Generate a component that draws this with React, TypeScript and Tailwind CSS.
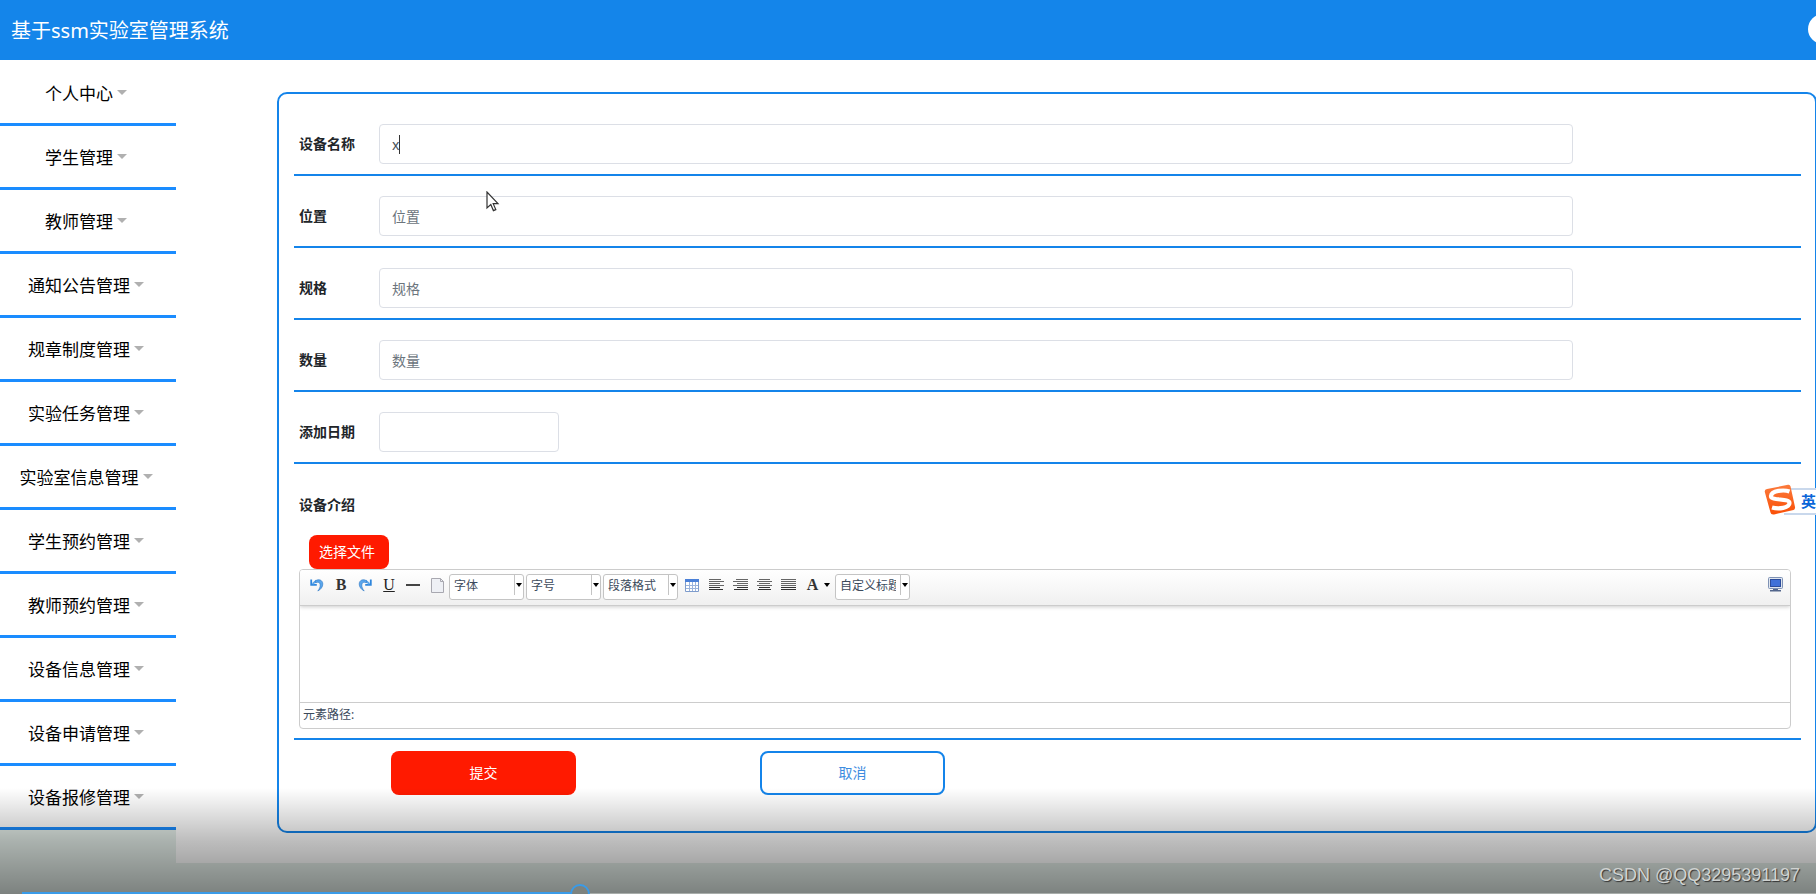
import { useState, type ReactNode } from "react";

const menu = [
  "个人中心",
  "学生管理",
  "教师管理",
  "通知公告管理",
  "规章制度管理",
  "实验任务管理",
  "实验室信息管理",
  "学生预约管理",
  "教师预约管理",
  "设备信息管理",
  "设备申请管理",
  "设备报修管理",
];

const fields = [
  { id: "name", label: "设备名称" },
  { id: "place", label: "位置" },
  { id: "spec", label: "规格" },
  { id: "count", label: "数量" },
];

function Row({ children }: { children: ReactNode }) {
  return (
    <div className="flex items-center border-b-2 border-[#1484ea] pt-5 pr-[10px] pb-[10px] pl-[5px]">
      {children}
    </div>
  );
}

function ToolButton({ label, children }: { label: string; children: ReactNode }) {
  return (
    <button type="button" aria-label={label} className="flex h-5 w-6 items-center justify-center">
      {children}
    </button>
  );
}

function ToolSelect({ label }: { label: string }) {
  return (
    <div className="relative mr-[2px] h-[26px] w-[75px] rounded-[3px] border border-[#c4c4c4] bg-white">
      <select
        aria-label={label}
        className="block h-[22px] w-full appearance-none overflow-hidden bg-transparent pr-[13px] pl-1 text-xs text-[#3c4a5c] outline-none"
      >
        <option>{label}</option>
      </select>
      <span className="pointer-events-none absolute top-0 right-0 flex h-5 w-[9px] items-center justify-center border-l border-[#c4c4c4]">
        <svg width="6" height="4" viewBox="0 0 6 4">
          <path d="M0 0h6L3 4z" fill="#000" />
        </svg>
      </span>
    </div>
  );
}

function Lines({ rows }: { rows: [number, number][] }) {
  return (
    <svg width="15" height="13" viewBox="0 0 15 13" shapeRendering="crispEdges">
      {rows.map(([x, w], i) => (
        <rect key={i} x={x} y={i * 2} width={w} height="1" fill={i > 3 ? "#333" : "#666"} />
      ))}
    </svg>
  );
}

function Undo() {
  return (
    <svg width="14" height="14" viewBox="0 0 14 14">
      <path d="M1.200 1.500v5.300h5.600" fill="none" stroke="#2f86dc" strokeWidth="1.800" />
      <path d="M2.500 6 6.500 2.500" fill="none" stroke="#5aa6ec" strokeWidth="1.800" />
      <path d="M5 3.200C8.500.3 12.800 2 12.800 6c0 3-2 5.500-5 7 1.600-2.200 2.500-4 2.400-6C10 4.500 8 3.400 5.800 5z" fill="#5aa6ec" stroke="#2a76c4" strokeWidth=".6" />
    </svg>
  );
}

function SogouLogo() {
  return (
    <svg width="32" height="32" viewBox="0 0 32 32">
      <defs>
        <linearGradient id="sg" x1="0" y1="0" x2="0" y2="1">
          <stop offset="0" stopColor="#fb7a3c" />
          <stop offset="1" stopColor="#fa4f06" />
        </linearGradient>
      </defs>
      <path d="M3 5 24 .8q2-.4 2.500 1.500L31 23q.4 2-1.500 3L10 30.500q-3 .5-3.500-2L.8 8Q.4 5.500 3 5z" fill="url(#sg)" />
      <path d="M25.500 7.500C20 5.500 7.500 6.500 7 12c-.3 5 18.500 2 18.500 7 0 5-11 6.500-17.500 4.500" fill="none" stroke="#fff" strokeWidth="4.200" />
    </svg>
  );
}

export default function App() {
  const [name, setName] = useState("x");
  return (
    <div className="relative flex min-h-screen flex-col overflow-hidden bg-[#e6f0eb] font-['Noto_Sans','Noto_Sans_CJK_SC',sans-serif] text-sm text-[#212529]">
      <header className="relative flex h-[60px] items-center bg-[#1485ea] px-[11px] pt-[2px]">
        <h1 className="text-xl text-white">基于ssm实验室管理系统</h1>
        <span className="absolute top-[14px] -right-[22px] size-[30px] rounded-full bg-white" />
      </header>

      <div className="flex items-start">
        <nav className="w-44 shrink-0 bg-white pt-[2px]">
          {menu.map((m) => (
            <a
              key={m}
              href="#"
              className="flex h-16 items-center justify-center gap-1 border-b-[3px] border-[#1a8cff] pt-[3px] pr-1 text-[17px] text-black"
            >
              {m}
              <svg className="mb-1" width="10" height="5" viewBox="0 0 10 5">
                <path d="M0 0h10L5 5z" fill="#b0b0b0" />
              </svg>
            </a>
          ))}
        </nav>

        <main className="min-w-0 flex-1 bg-white pt-8 pb-[30px] pl-[101px]">
          <form className="-mr-px rounded-[10px] border-2 border-[#1484ea] pt-[10px] pr-[14px] pb-9 pl-[15px]" onSubmit={(e) => e.preventDefault()}>
            {fields.map((f, i) => (
              <Row key={f.id}>
                <label htmlFor={f.id} className="w-20 shrink-0 font-bold">
                  {f.label}
                </label>
                <div className="relative w-4/5">
                  <input
                    id={f.id}
                    placeholder={f.label}
                    {...(i === 0 ? { value: name, onChange: (e: { target: { value: string } }) => setName(e.target.value) } : {})}
                    className="block h-10 w-full rounded border border-[#dcdfe6] bg-white px-3 text-sm text-[#495057] outline-none placeholder:text-[#6c757d]"
                  />
                  {i === 0 && <span className="absolute top-[11px] left-5 h-[19px] w-px bg-[#333]" />}
                </div>
              </Row>
            ))}
            <Row>
              <label htmlFor="date" className="w-20 shrink-0 font-bold">
                添加日期
              </label>
              <input id="date" className="block h-10 w-[180px] rounded border border-[#dcdfe6] bg-white px-3 outline-none" />
            </Row>

            <div className="border-b-2 border-[#1484ea] pt-[31px] pr-[10px] pb-[9px] pl-[5px]">
              <label htmlFor="intro" className="block leading-5 font-bold">
                设备介绍
              </label>
              <button type="button" className="mt-5 ml-[10px] block h-[34px] w-20 rounded-lg bg-[#ff1a00] text-sm text-white">
                <span className="block pr-1">选择文件</span>
              </button>
              <div className="overflow-hidden rounded border border-[#ccc] bg-white">
                <div className="flex h-9 items-start border-b border-[#ccc] bg-linear-to-b from-white to-[#f0f0f0] pt-1 pr-[7px] pl-[5px] shadow-[0_1px_4px_rgba(0,0,0,0.2)]">
                  <div className="flex pt-px">
                    <ToolButton label="撤销">
                      <Undo />
                    </ToolButton>
                    <ToolButton label="加粗">
                      <span className="font-['Liberation_Serif',serif] text-base leading-5 font-bold text-[#333]">B</span>
                    </ToolButton>
                    <ToolButton label="重做">
                      <span className="-scale-x-100">
                        <Undo />
                      </span>
                    </ToolButton>
                    <ToolButton label="下划线">
                      <span className="font-['Liberation_Serif',serif] text-base leading-5 text-[#222] underline">U</span>
                    </ToolButton>
                    <ToolButton label="分隔线">
                      <span className="h-[2px] w-[14px] bg-[#444]" />
                    </ToolButton>
                    <ToolButton label="新建">
                      <svg width="13" height="15" viewBox="0 0 13 15">
                        <path d="M.5.500h9l3 3v11H.5z" fill="#eef0f5" stroke="#a8a8b0" />
                        <path d="M9.500.500v3h3" fill="none" stroke="#a8a8b0" />
                      </svg>
                    </ToolButton>
                  </div>
                  <ToolSelect label="字体" />
                  <ToolSelect label="字号" />
                  <ToolSelect label="段落格式" />
                  <div className="flex pt-px">
                    <ToolButton label="表格">
                      <svg width="14" height="13" viewBox="0 0 14 13">
                        <path d="M.5.500h13v12H.5z" fill="#fff" stroke="#7e9ccc" />
                        <path d="M0 0h14v3H0z" fill="#4a80d8" />
                        <path d="M1 6.500h12M1 9.500h12M4.500 3v9M7.500 3v9M10.500 3v9" stroke="#9bb4dc" />
                      </svg>
                    </ToolButton>
                    <ToolButton label="左对齐">
                      <Lines rows={[[0, 12], [0, 15], [0, 11], [0, 15], [0, 11], [0, 14]]} />
                    </ToolButton>
                    <ToolButton label="右对齐">
                      <Lines rows={[[3, 12], [0, 15], [4, 11], [0, 15], [4, 11], [1, 14]]} />
                    </ToolButton>
                    <ToolButton label="居中">
                      <Lines rows={[[2, 11], [0, 15], [2, 11], [0, 15], [2, 11], [1, 13]]} />
                    </ToolButton>
                    <ToolButton label="两端对齐">
                      <Lines rows={[[0, 15], [0, 15], [0, 15], [0, 15], [0, 15], [0, 15]]} />
                    </ToolButton>
                    <button type="button" aria-label="字体颜色" className="flex h-5 w-[35px] items-center justify-center gap-[6px] pl-[2px]">
                      <span className="font-['Liberation_Serif',serif] text-base leading-5 font-bold text-[#333]">A</span>
                      <svg width="6" height="4" viewBox="0 0 6 4">
                        <path d="M0 0h6L3 4z" fill="#000" />
                      </svg>
                    </button>
                  </div>
                  <ToolSelect label="自定义标题" />
                  <button type="button" aria-label="全屏" className="mt-[3px] ml-auto">
                    <svg width="15" height="15" viewBox="0 0 15 15">
                      <rect x=".5" y=".5" width="14" height="11" rx="1" fill="#dfe5ee" stroke="#7f92b5" />
                      <rect x="2.500" y="2.500" width="10" height="7" fill="#3f70d8" stroke="#2b4c9c" />
                      <path d="M5 12h5v1H5zM2 13h11v1.500H2z" fill="#53668c" />
                    </svg>
                  </button>
                </div>
                <textarea id="intro" className="block h-24 w-full resize-none bg-transparent p-2 outline-none" />
                <div className="h-[26px] border-t border-[#ccc] pl-[3px] text-xs leading-6 text-[#3c4a5c]">元素路径:</div>
              </div>
            </div>

            <div className="flex gap-[184px] pt-[11px] pl-[97px]">
              <button type="submit" className="h-[44px] w-[185px] rounded-lg bg-[#ff1a00] text-white">
                提交
              </button>
              <button type="button" className="h-[44px] w-[185px] rounded-lg border-2 border-[#1484ea] bg-white text-[#3d8ce0]">
                取消
              </button>
            </div>
          </form>
        </main>
      </div>

      <svg className="absolute top-[191px] left-[486px]" width="14" height="21" viewBox="0 0 14 21">
        <path d="M1 1v16l3.800-3.400 2.600 6 2.400-1-2.600-5.900H12z" fill="#fff" stroke="#333" strokeWidth="1.200" />
      </svg>

      <div className="absolute top-[484px] -right-[2px] flex w-[54px] items-start">
        <div className="absolute top-1 left-5 flex h-[27px] w-9 items-center border-y-2 border-[#c9d8ec] bg-white pl-[17px] text-[15px] font-bold text-[#0b66d8]">
          英
        </div>
        <div className="relative">
          <SogouLogo />
        </div>
      </div>

      <div className="pointer-events-none absolute inset-x-0 bottom-0 h-[106px] bg-linear-to-b from-black/0 via-black/26 to-black/46" />

      <div className="absolute inset-x-0 bottom-0 h-[10px] overflow-hidden">
        <div className="absolute right-0 bottom-0 left-[22px] h-px bg-[#a8adaa]" />
        <div className="absolute bottom-0 left-[22px] h-[2px] w-[550px] bg-[#3a9be8]" />
        <div className="absolute top-0 left-[570px] size-5 rounded-full border-2 border-[#3a9be8] bg-[#7d837f]" />
      </div>

      <p className="absolute right-4 bottom-[7px] font-['Liberation_Sans',sans-serif] text-lg leading-6 text-[#d0d3d1] [text-shadow:1px_1px_1px_#333]">
        CSDN @QQ3295391197
      </p>
    </div>
  );
}
